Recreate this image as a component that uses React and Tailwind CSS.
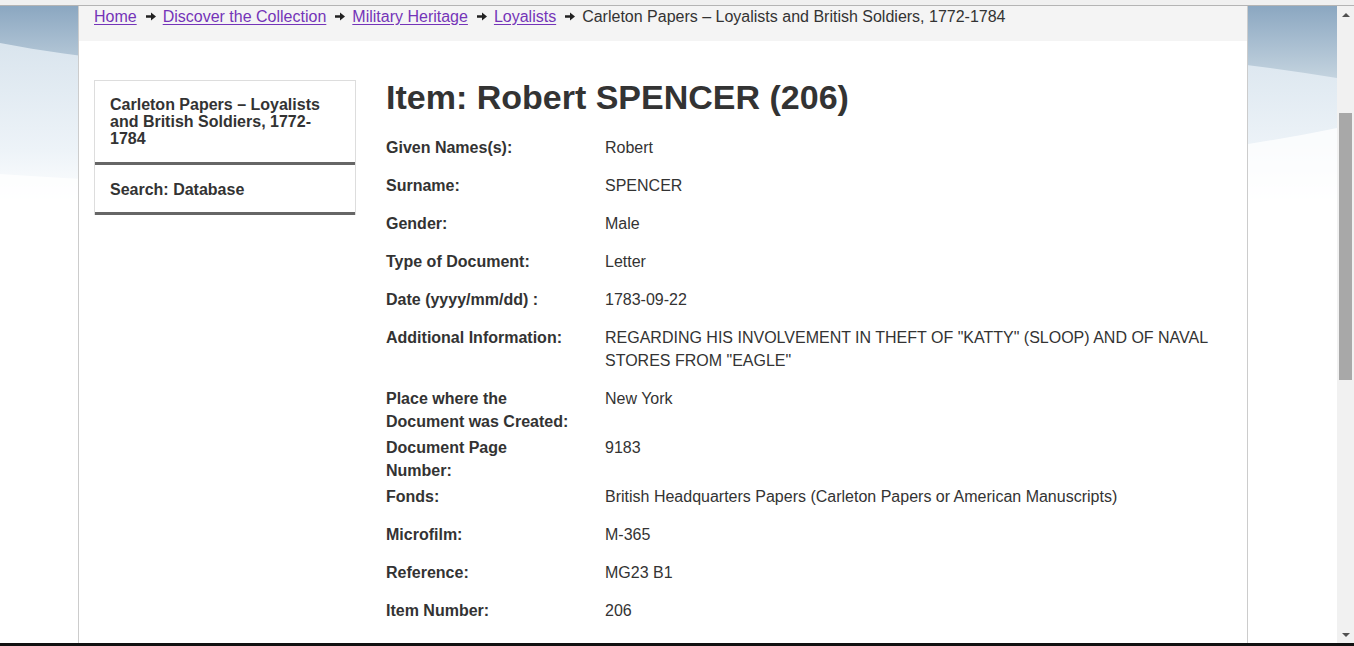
import React from 'react';

const rows = [
  ['Given Names(s):', 'Robert'],
  ['Surname:', 'SPENCER'],
  ['Gender:', 'Male'],
  ['Type of Document:', 'Letter'],
  ['Date (yyyy/mm/dd) :', '1783-09-22'],
  ['Additional Information:', 'REGARDING HIS INVOLVEMENT IN THEFT OF "KATTY" (SLOOP) AND OF NAVAL STORES FROM "EAGLE"'],
  ['Place where the Document was Created:', 'New York', true],
  ['Document Page Number:', '9183', true],
  ['Fonds:', 'British Headquarters Papers (Carleton Papers or American Manuscripts)'],
  ['Microfilm:', 'M-365'],
  ['Reference:', 'MG23 B1'],
  ['Item Number:', '206'],
];

const Arrow = () => (
  <svg width="10" height="9" viewBox="0 0 10 9" className="mb-[2px] ml-[9px] mr-[7px] inline-block" fill="#222">
    <path d="M0 3.2h5V0.5L10 4.5 5 8.5V5.8H0z" />
  </svg>
);

const Crumb = ({ children }) => (
  <a href="#" className="text-[#7434b8] underline underline-offset-2">{children}</a>
);

// decorative sky behind the page container
const Sky = () => (
  <svg className="absolute left-0 top-0" width="1337" height="220" viewBox="0 0 1337 220">
    <defs>
      <linearGradient id="top" x1="0" y1="0" x2="0" y2="75" gradientUnits="userSpaceOnUse">
        <stop offset="0" stopColor="#8ba7c1" />
        <stop offset="1" stopColor="#c6d5e0" />
      </linearGradient>
      <linearGradient id="low" x1="0" y1="40" x2="0" y2="200" gradientUnits="userSpaceOnUse">
        <stop offset="0" stopColor="#dae5ee" />
        <stop offset="0.65" stopColor="#edf3f8" />
        <stop offset="1" stopColor="#ffffff" />
      </linearGradient>
    </defs>
    <rect x="0" y="0" width="1337" height="220" fill="url(#low)" />
    <path d="M0 168 C500 200 1000 190 1337 122 V220 H0 Z" fill="#ffffff" opacity="0.75" />
    <path d="M0 0 H1337 V72 C800 -16 400 114 0 37 Z" fill="url(#top)" />
  </svg>
);

export default function App() {
  return (
    <div className="h-[646px] w-[1354px] overflow-hidden bg-[#f0f0f0] font-['Liberation_Sans',Arial,sans-serif] text-[#333]">
      <div className="h-[5px]" />
      <div className="h-px bg-[#b4b4b4]" />
      <div className="flex h-[637px]">
        <div className="relative h-full w-[1337px] overflow-hidden bg-white">
          <Sky />
          <div className="relative ml-[78px] h-full w-[1170px] border-x border-[#cccccc] bg-white">
            {/* Breadcrumb */}
            <div className="h-[35px] bg-[#f4f4f4] pl-[15px] text-[16px] leading-[22px]">
              <Crumb>Home</Crumb>
              <Arrow />
              <Crumb>Discover the Collection</Crumb>
              <Arrow />
              <Crumb>Military Heritage</Crumb>
              <Arrow />
              <Crumb>Loyalists</Crumb>
              <Arrow />
              <span>Carleton Papers – Loyalists and British Soldiers, 1772-1784</span>
            </div>

            <div className="flex items-start pl-[15px] pt-[39px]">
              {/* Sidebar */}
              <div className="w-[262px] shrink-0 border-x border-t border-[#dddddd] text-[16px] font-bold leading-[17px]">
                <div className="border-b-[3px] border-[#666666] px-[15px] py-[15px]">
                  Carleton Papers – Loyalists and British Soldiers, 1772-1784
                </div>
                <div className="border-b-[3px] border-[#666666] px-[15px] pb-[14px] pt-[16px]">Search: Database</div>
              </div>

              {/* Main */}
              <div className="ml-[30px] w-[845px]">
                <h1 className="-mt-[3px] mb-[19px] text-[34px] font-bold leading-[40px]">Item: Robert SPENCER (206)</h1>
                <div className="text-[16px] leading-[23px]">
                  {rows.map(([label, value, tight]) => (
                    <div key={label} className={`flex ${tight ? 'mb-[3px]' : 'mb-[15px]'}`}>
                      <div className="w-[186px] shrink-0 font-bold">{label}</div>
                      <div className="ml-[33px]">{value}</div>
                    </div>
                  ))}
                </div>
              </div>
            </div>
          </div>
        </div>

        {/* Scrollbar */}
        <div className="relative h-full w-[17px] bg-[#f1f1f1]">
          <div className="absolute left-[5px] top-[7px] h-0 w-0 border-x-[4px] border-b-[4px] border-x-transparent border-b-[#505050]" />
          <div className="absolute left-[2px] top-[107px] h-[267px] w-[13px] bg-[#a8a8a8]" />
          <div className="absolute left-[5px] top-[627px] h-0 w-0 border-x-[4px] border-t-[4px] border-x-transparent border-t-[#505050]" />
        </div>
      </div>
      <div className="h-[3px] bg-[#111111]" />
    </div>
  );
}
